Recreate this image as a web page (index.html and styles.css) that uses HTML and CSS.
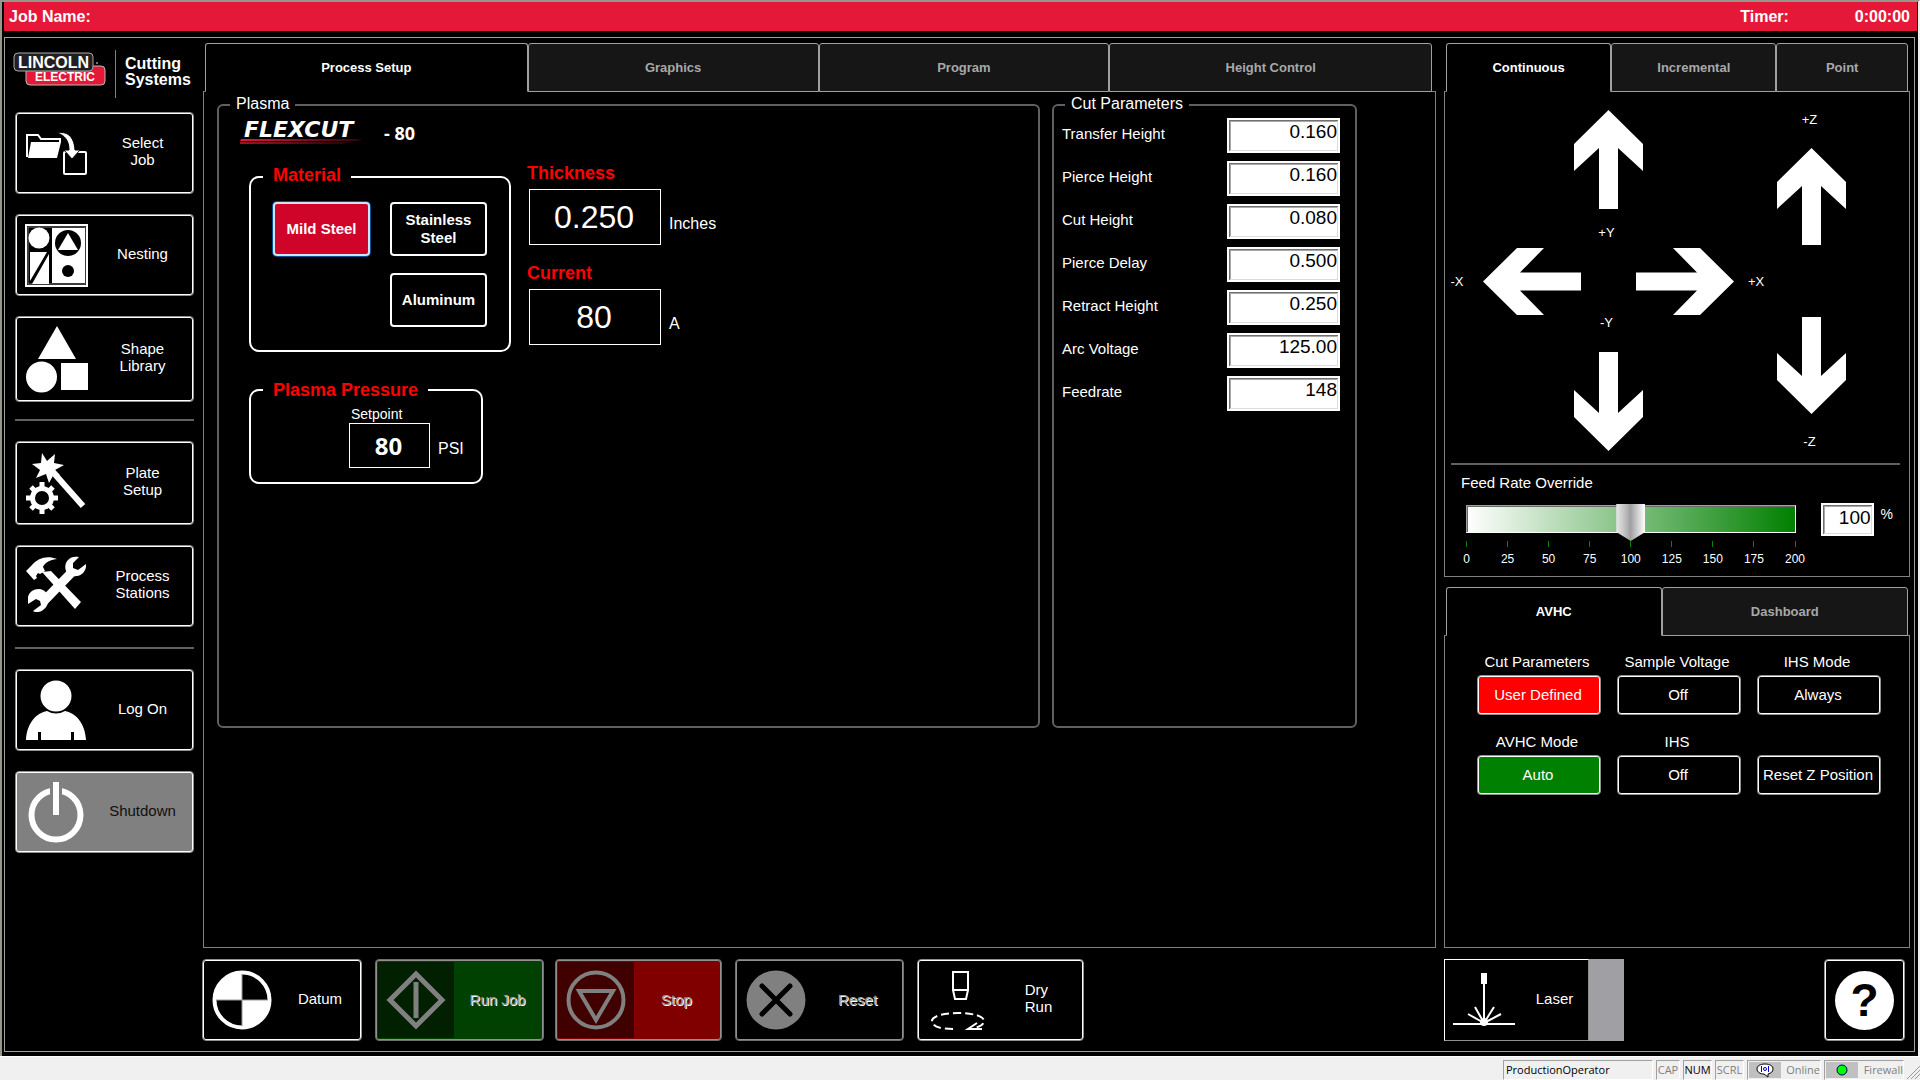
FILE: index.html
```html
<!DOCTYPE html>
<html lang="en">
<head>
<meta charset="utf-8">
<title>Lincoln Electric Cutting Systems</title>
<link rel="stylesheet" href="styles.css">
</head>
<body>
<div class="app">
  <header class="titlebar">
    <span>Job Name:</span>
    <span class="timer"><span>Timer:</span><span>0:00:00</span></span>
  </header>

  <div class="frame">
    <nav class="sidebar">
      <div class="brand">
        <svg class="brand-logo" viewBox="0 0 94 36" width="94" height="36" role="img">
          <rect x="13" y="14" width="79" height="19" rx="4" fill="#e51937" stroke="#b9b9b9"/>
          <rect x="1" y="1" width="79" height="18" rx="4" fill="#231f20" stroke="#a8a8a8"/>
          <text x="5" y="16" class="logo-top">LINCOLN</text>
          <text x="22" y="29" class="logo-bottom">ELECTRIC</text>
          <circle cx="84" cy="11" r="1" fill="#999"/>
        </svg>
        <div class="brand-name">Cutting<br>Systems</div>
      </div>

      <button class="tile" type="button">
        <span class="tile-icon"><svg viewBox="0 0 62 62" width="62" height="62">
          <path d="M2 35V13h11l3 4h19v3" fill="none" stroke="#fff" stroke-width="2"/>
          <path d="M6 20h30l-4 16H3z" fill="#fff"/>
          <rect x="39" y="30" width="22" height="22" rx="1" fill="none" stroke="#fff" stroke-width="2"/>
          <path d="M32 11c9-2 17 2 18 17h5l-8 9-8-9h5c0-9-4-15-12-17z" fill="#fff" stroke="#000"/>
        </svg></span>
        <span class="tile-label">Select<br>Job</span>
      </button>
      <button class="tile" type="button">
        <span class="tile-icon"><svg viewBox="0 0 63 63" width="63" height="63">
          <rect x="1" y="1" width="61" height="61" fill="#000" stroke="#fff" stroke-width="2"/>
          <rect x="3" y="3" width="57" height="57" fill="none" stroke="#777"/>
          <circle cx="14" cy="14" r="10.500" fill="#fff"/>
          <path d="M5 28h17L5 57zM24 30v30H7z" fill="#fff"/>
          <rect x="27" y="4" width="33" height="55" fill="#fff"/>
          <circle cx="43" cy="19" r="13" fill="#000"/>
          <path d="M43 9l10 17H33z" fill="#fff"/>
          <circle cx="43" cy="47" r="6" fill="#000"/>
        </svg></span>
        <span class="tile-label">Nesting</span>
      </button>
      <button class="tile tile-tall" type="button">
        <span class="tile-icon"><svg viewBox="0 0 64 68" width="64" height="68">
          <path d="M33 1l19 33H14z" fill="#fff"/>
          <circle cx="17.500" cy="52" r="15.500" fill="#fff"/>
          <rect x="37" y="38" width="27" height="27" fill="#fff"/>
        </svg></span>
        <span class="tile-label">Shape<br>Library</span>
      </button>
      <hr class="rule rule-tight">
      <button class="tile tile-mid" type="button">
        <span class="tile-icon"><svg viewBox="0 0 62 62" width="62" height="62">
          <path d="M17 1l5 8 8-7-1 9 10 2-9 5 5 5-6-1-5 9-3-9-10 4 4-8-8-6 9-1z" fill="#fff"/>
          <path d="M27 19l31 35" stroke="#fff" stroke-width="6"/>
          <circle cx="17" cy="46" r="9.500" fill="none" stroke="#fff" stroke-width="5"/>
          <g stroke="#fff" stroke-width="5"><path d="M17 30v5M17 57v5M1 46h5M28 46h5M6 35l3 3M25 54l3 3M28 35l-3 3M9 54l-3 3"/></g>
        </svg></span>
        <span class="tile-label">Plate<br>Setup</span>
      </button>
      <button class="tile" type="button">
        <span class="tile-icon"><svg viewBox="0 0 62 62" width="62" height="62">
          <path d="M18 47L48 16" stroke="#fff" stroke-width="9"/>
          <path d="M54 2c-9-2-16 5-13 14 4 8 18 7 20-4V9l-8 6-5-2 0-5z" fill="#fff"/>
          <path d="M3 49v-7c2-9 15-11 19-3 4 9-2 19-12 18l-2-1 8-6-1-4-4-2z" fill="#fff"/>
          <path d="M17 17l9-1 27 28 3 3-6 7-24-27z" fill="#fff"/>
          <path d="M1 16l6-6C13 3 22 0 32 4c-9 1-13 5-14 8l2 4-5 3-2-1-2 3 1 2-3 2z" fill="#fff"/>
        </svg></span>
        <span class="tile-label">Process<br>Stations</span>
      </button>
      <hr class="rule">
      <button class="tile" type="button">
        <span class="tile-icon"><svg viewBox="0 0 62 62" width="62" height="62">
          <path d="M1 61c1-18 11-27 21-29q9 5 18 0c10 2 20 11 21 29H49v-8h-3v8H16v-8h-3v8z" fill="#fff"/>
          <circle cx="31" cy="17" r="15.500" fill="#fff"/>
        </svg></span>
        <span class="tile-label">Log On</span>
      </button>
      <button class="tile tile-grey" type="button">
        <span class="tile-icon"><svg viewBox="0 0 62 62" width="62" height="62">
          <circle cx="31" cy="34" r="24.500" fill="none" stroke="#fff" stroke-width="6"/>
          <path d="M25 2h12v14H25z" fill="#808080"/>
          <path d="M28 1h6v33h-6z" fill="#fff"/>
        </svg></span>
        <span class="tile-label">Shutdown</span>
      </button>
    </nav>

    <main class="work">
      <div class="tabs">
        <button class="tab tab-active" type="button">Process Setup</button>
        <button class="tab" type="button">Graphics</button>
        <button class="tab" type="button">Program</button>
        <button class="tab tab-wide" type="button">Height Control</button>
      </div>
      <section class="tab-body setup">
        <fieldset class="group plasma">
          <legend>Plasma</legend>
          <div class="model">
            <svg width="136" height="38" viewBox="0 0 136 38" role="img">
              <defs><linearGradient id="streak"><stop offset="0" stop-color="#e51937"/><stop offset="1" stop-color="#2a0508"/></linearGradient></defs>
              <text x="4" y="22" class="flexcut">FLEXCUT</text>
              <path d="M1 24h122l-6 2H0z" fill="url(#streak)"/>
              <path d="M0 27h114l-12 2H0z" fill="url(#streak)" opacity=".7"/>
            </svg>
            <span>- 80</span>
          </div>
          <div class="settings">
            <div class="settings-left">
              <fieldset class="box material">
                <legend>Material</legend>
                <div class="material-grid">
                  <button class="choice choice-on" type="button">Mild Steel</button>
                  <button class="choice" type="button">Stainless Steel</button>
                  <button class="choice choice-second" type="button">Aluminum</button>
                </div>
              </fieldset>
              <fieldset class="box pressure">
                <legend>Plasma Pressure</legend>
                <label class="small-label" for="setpoint">Setpoint</label>
                <div class="value-row">
                  <input class="value value-small" id="setpoint" type="text" value="80">
                  <span>PSI</span>
                </div>
              </fieldset>
            </div>
            <div class="readings">
              <label class="red-label" for="thickness">Thickness</label>
              <div class="value-row">
                <input class="value" id="thickness" type="text" value="0.250">
                <span>Inches</span>
              </div>
              <label class="red-label" for="current">Current</label>
              <div class="value-row">
                <input class="value" id="current" type="text" value="80">
                <span>A</span>
              </div>
            </div>
          </div>
        </fieldset>

        <fieldset class="group params">
          <legend>Cut Parameters</legend>
          <div class="param-list">
            <div class="param"><label for="p1">Transfer Height</label><input class="num" id="p1" type="text" value="0.160"></div>
            <div class="param"><label for="p2">Pierce Height</label><input class="num" id="p2" type="text" value="0.160"></div>
            <div class="param"><label for="p3">Cut Height</label><input class="num" id="p3" type="text" value="0.080"></div>
            <div class="param"><label for="p4">Pierce Delay</label><input class="num" id="p4" type="text" value="0.500"></div>
            <div class="param"><label for="p5">Retract Height</label><input class="num" id="p5" type="text" value="0.250"></div>
            <div class="param"><label for="p6">Arc Voltage</label><input class="num" id="p6" type="text" value="125.00"></div>
            <div class="param"><label for="p7">Feedrate</label><input class="num" id="p7" type="text" value="148"></div>
          </div>
        </fieldset>
      </section>

      <div class="actions">
        <button class="tile datum" type="button">
          <span class="tile-icon"><svg viewBox="0 0 60 60" width="60" height="60">
            <circle cx="30" cy="30" r="27.500" fill="#000" stroke="#fff" stroke-width="4"/>
            <path d="M30 30V2A28 28 0 0 0 2 30zM30 30v28a28 28 0 0 0 28-28z" fill="#fff"/>
            <path d="M30 4v52M4 30h52" stroke="#999"/>
          </svg></span>
          <span class="tile-label">Datum</span>
        </button>
        <button class="tile off run" type="button" disabled>
          <span class="tile-icon"><svg viewBox="0 0 60 60" width="60" height="60" fill="none" stroke="#808080">
            <path d="M30 4l26 26-26 26L4 30z" stroke-width="5"/><path d="M30 12v36" stroke-width="5"/>
          </svg></span>
          <span class="tile-label">Run Job</span>
        </button>
        <button class="tile off stop" type="button" disabled>
          <span class="tile-icon"><svg viewBox="0 0 60 60" width="60" height="60" fill="none" stroke="#808080">
            <circle cx="30" cy="30" r="27.500" stroke-width="4"/><path d="M13 21h34L30 50z" stroke-width="4"/>
          </svg></span>
          <span class="tile-label">Stop</span>
        </button>
        <button class="tile off reset" type="button" disabled>
          <span class="tile-icon"><svg viewBox="0 0 60 60" width="60" height="60">
            <circle cx="30" cy="30" r="29.500" fill="#808080"/>
            <path d="M16 16l28 28M44 16L16 44" stroke="#000" stroke-width="5" stroke-linecap="round"/>
          </svg></span>
          <span class="tile-label">Reset</span>
        </button>
        <button class="tile dry" type="button">
          <span class="tile-icon"><svg viewBox="0 0 60 60" width="60" height="60" fill="none" stroke="#fff" stroke-width="2">
            <path d="M26 2h15v18H26zM26 20l2 9h11l2-9"/>
            <path d="M26 59C12 59 5 56 5 51c0-5 12-8 26-8s26 3 26 8c0 3-3 5-9 7" stroke-dasharray="8 4"/>
            <path d="M50 53l-9 6h14" />
          </svg></span>
          <span class="tile-label"><span class="left">Dry<br>Run</span></span>
        </button>
      </div>
    </main>

    <aside class="side">
      <div class="tabs">
        <button class="tab jog-a tab-active" type="button">Continuous</button>
        <button class="tab jog-a" type="button">Incremental</button>
        <button class="tab jog-b" type="button">Point</button>
      </div>
      <section class="tab-body jog">
        <div class="pads">
          <div class="pad-xy">
            <button class="arrow y-plus" type="button" aria-labelledby="lyp"><svg width="69" height="99" viewBox="0 0 69 99"><path d="M34.500 0L69 34v27L44 38v61H25V38L0 61V34z"/></svg></button>
            <span class="axis l-y-plus" id="lyp">+Y</span>
            <span class="axis l-x-minus" id="lxm">-X</span>
            <button class="arrow x-minus" type="button" aria-labelledby="lxm"><svg width="98" height="67" viewBox="0 0 98 67"><path d="M0 33.500L34 0h27L37 24.500h61v18H37L61 67H34z"/></svg></button>
            <button class="arrow x-plus" type="button" aria-labelledby="lxp"><svg width="98" height="67" viewBox="0 0 98 67"><path d="M98 33.500L64 0H37l24 24.500H0v18h61L37 67h27z"/></svg></button>
            <span class="axis l-x-plus" id="lxp">+X</span>
            <span class="axis l-y-minus" id="lym">-Y</span>
            <button class="arrow y-minus" type="button" aria-labelledby="lym"><svg width="69" height="99" viewBox="0 0 69 99"><path d="M34.500 99L69 65V38L44 61V0H25v61L0 38v27z"/></svg></button>
          </div>
          <div class="pad-z">
            <span class="axis" id="lzp">+Z</span>
            <button class="arrow" type="button" aria-labelledby="lzp"><svg width="69" height="97" viewBox="0 0 69 97"><path d="M34.500 0L69 34v27L44 38v59H25V38L0 61V34z"/></svg></button>
            <button class="arrow z-minus" type="button" aria-labelledby="lzm"><svg width="69" height="97" viewBox="0 0 69 97"><path d="M34.500 97L69 63V36L44 59V0H25v59L0 36v27z"/></svg></button>
            <span class="axis" id="lzm">-Z</span>
          </div>
        </div>
        <hr class="rule">
        <div class="feed">
          <label class="feed-title" for="feed">Feed Rate Override</label>
          <div class="feed-row">
            <div class="feed-slider">
              <input class="slider" id="feed" type="range" min="0" max="200" value="100">
              <div class="ticks"><span>0</span><span>25</span><span>50</span><span>75</span><span>100</span><span>125</span><span>150</span><span>175</span><span>200</span></div>
            </div>
            <input class="num num-feed" id="pct" type="text" value="100">
            <label class="pct" for="pct">%</label>
          </div>
        </div>
      </section>

      <div class="tabs tabs-lower">
        <button class="tab avhc-a tab-active" type="button">AVHC</button>
        <button class="tab avhc-b" type="button">Dashboard</button>
      </div>
      <section class="tab-body avhc">
        <div class="modes">
          <div class="mode"><span>Cut Parameters</span><button class="mode-btn red" type="button">User Defined</button></div>
          <div class="mode"><span>Sample Voltage</span><button class="mode-btn" type="button">Off</button></div>
          <div class="mode"><span>IHS Mode</span><button class="mode-btn" type="button">Always</button></div>
          <div class="mode"><span>AVHC Mode</span><button class="mode-btn green" type="button">Auto</button></div>
          <div class="mode"><span>IHS</span><button class="mode-btn" type="button">Off</button></div>
          <div class="mode"><button class="mode-btn" type="button">Reset Z Position</button></div>
        </div>
      </section>

      <div class="actions">
        <button class="tile laser" type="button">
          <span class="tile-icon"><svg viewBox="0 0 66 60" width="66" height="60">
            <path d="M30 3h6v11h-6zM32 14h2v36h-2z" fill="#fff"/>
            <path d="M2 54h62" stroke="#fff" stroke-width="2"/>
            <path d="M33 53L17 44M33 53L24 37M33 53L43 37M33 53l17-9" stroke="#fff" stroke-width="2"/>
            <circle cx="33" cy="52" r="4" fill="#fff"/>
          </svg></span>
          <span class="tile-label">Laser</span>
        </button>
        <span class="laser-state"></span>
        <button class="tile help" type="button"><span>?</span></button>
      </div>
    </aside>
  </div>
</div>

<footer class="status">
  <span class="cell operator">ProductionOperator</span>
  <span class="cell cap dim">CAP</span>
  <span class="cell num-lock">NUM</span>
  <span class="cell scrl dim">SCRL</span>
  <span class="cell online dim"><span class="lamp"><svg width="18" height="15" viewBox="0 0 18 15"><path d="M9 1C4 1 1 3 1 6s3 5 7 5l4 3v-3c3-1 5-2 5-5s-3-5-8-5z" fill="#fff" stroke="#000"/><path d="M5.500 3v6M12.500 3v6" stroke="#00c"/><circle cx="9" cy="6" r="1.500" fill="none" stroke="#00c"/></svg></span>Online</span>
  <span class="cell firewall dim"><span class="lamp"><svg width="12" height="12" viewBox="0 0 12 12"><circle cx="6" cy="6" r="5" fill="#0f0" stroke="#006"/></svg></span>Firewall</span>
  <svg class="grip" width="13" height="13" viewBox="0 0 13 13"><path d="M0 13L13 0M4 13l9-9M8 13l5-5" stroke="#999"/></svg>
</footer>
</body>
</html>
```
FILE: styles.css
```css
* {
  box-sizing: border-box;
}

body {
  margin: 0;
  min-height: 100vh;
  display: flex;
  flex-direction: column;
  background: #000;
  color: #fff;
  font-family: "Liberation Sans", Arial, sans-serif;
  font-size: 15px;
}

button,
input {
  font: inherit;
  color: inherit;
  margin: 0;
}

svg {
  display: block;
}

.app {
  flex: 1;
  display: flex;
  flex-direction: column;
  border: 2px solid #96968f;
  border-right-color: #f0f0f0;
  border-bottom: 0;
  padding: 0 1px 0 2px;
}

.titlebar {
  display: flex;
  justify-content: space-between;
  padding: 0 7px 0 5px;
  background: #e51937;
  font-size: 16px;
  font-weight: bold;
  line-height: 29px;
}

.timer {
  display: flex;
  gap: 66px;
}

.frame {
  flex: 1;
  display: flex;
  margin: 6px 2px 4px 0;
  padding: 5px 4px 10px 0;
  border: 1px solid #a0a0a0;
}

/* Left navigation */

.sidebar {
  width: 198px;
  padding: 7px 9px 0 10px;
  display: flex;
  flex-direction: column;
  gap: 20px;
}

.brand {
  display: flex;
  align-items: center;
  height: 48px;
  margin: 0 0 -6px -2px;
}

.brand-logo {
  margin: 0 8px 8px 0;
  flex: none;
}

.logo-top {
  font-size: 16px;
  font-weight: bold;
  fill: #fff;
}

.logo-bottom {
  font-size: 12px;
  font-weight: bold;
  fill: #fff;
}

.brand-name {
  align-self: stretch;
  padding: 6px 0 0 9px;
  border-left: 1px solid #808080;
  font-size: 16px;
  font-weight: bold;
  line-height: 16px;
}

.tile {
  display: flex;
  height: 82px;
  flex: none;
  padding: 1px;
  border: 1px solid #909090;
  border-radius: 4px;
  background: #000;
  box-shadow: inset 0 0 0 1px #fff;
  line-height: 17px;
}

.tile-tall {
  height: 86px;
}

.tile-mid {
  height: 84px;
}

.tile-icon {
  width: 76px;
  flex: none;
  align-self: stretch;
  display: flex;
  align-items: center;
  justify-content: center;
}

.tile-label {
  flex: 1;
  align-self: center;
  padding-bottom: 4px;
  text-align: center;
  white-space: nowrap;
}

.sidebar .tile-icon {
  padding-left: 2px;
}

.tile-grey {
  background: #808080;
  color: #101010;
}

.rule {
  align-self: stretch;
  height: 2px;
  margin: 0;
  border: 0;
  background: #606060;
}

.rule-tight {
  margin-top: -3px;
}

/* Tabs */

.tabs {
  display: flex;
  height: 49px;
  margin-bottom: -1px;
  padding: 0 4px 0 2px;
}

.side .tabs {
  padding-right: 2px;
}

.tab {
  position: relative;
  flex: 290 0 0;
  padding: 0;
  border: 1px solid #a0a0a0;
  border-radius: 3px 3px 0 0;
  background: #161616;
  color: #a8a8a8;
  font-size: 13px;
  font-weight: bold;
}

.tab-active {
  flex-grow: 322;
  border-bottom-color: #000;
  background: #000;
  color: #fff;
}

.tab-wide {
  flex-grow: 322;
}

.jog-a {
  flex-grow: 165;
}

.jog-b {
  flex-grow: 131;
}

.avhc-a {
  flex-grow: 215;
}

.avhc-b {
  flex-grow: 246;
}

.tab-body {
  border: 1px solid #808080;
}

/* Process setup */

.work {
  flex: 1;
  display: flex;
  flex-direction: column;
}

.setup {
  flex: 1;
  display: flex;
  align-items: flex-start;
  gap: 12px;
  padding: 3px 78px 0 13px;
}

fieldset {
  margin: 0;
  padding: 0;
  min-width: 0;
}

.group {
  min-height: 633px;
  border: 2px solid #606060;
  border-radius: 6px;
}

.group > legend {
  margin-left: 11px;
  padding: 0 6px 2px;
  font-size: 16px;
  line-height: 18px;
}

.plasma {
  flex: 1;
}

.params {
  width: 305px;
}

.model {
  display: flex;
  align-items: center;
  gap: 8px;
  height: 38px;
  margin: 0 0 9px 21px;
  font-family: "Open Sans", sans-serif;
  font-size: 18px;
  font-weight: bold;
  line-height: 24px;
}

.model span {
  padding-bottom: 2px;
}

.flexcut {
  font-family: "DejaVu Sans", sans-serif;
  font-size: 22px;
  font-weight: bold;
  font-style: italic;
  fill: #fff;
}

.settings {
  display: flex;
  gap: 16px;
  padding-left: 30px;
}

.settings-left {
  display: flex;
  flex-direction: column;
  align-items: flex-start;
  gap: 27px;
  padding-top: 4px;
}

.box {
  border: 2px solid #fff;
  border-radius: 10px;
}

.box > legend {
  margin-left: 12px;
  padding: 0 10px;
}

.box > legend,
.red-label {
  color: #f00;
  font-size: 18px;
  font-weight: bold;
  line-height: 22px;
}

.box.material > legend {
  padding-bottom: 4px;
  line-height: 18px;
}

.material-grid {
  display: grid;
  grid-template-columns: 97px 97px;
  grid-auto-rows: 54px;
  gap: 17px 20px;
  padding: 14px 22px 23px;
}

.choice {
  padding: 0;
  border: 2px solid #fff;
  border-radius: 4px;
  background: #000;
  font-weight: bold;
  line-height: 18px;
}

.choice-on {
  border-color: #cce4f7;
  background: #d00428;
  box-shadow: 0 0 0 1px #0a4f8f;
}

.choice-second {
  grid-column: 2;
}

.pressure {
  width: 234px;
  padding-bottom: 14px;
}

.small-label {
  display: block;
  padding: 4px 0 0 100px;
  font-size: 14px;
  line-height: 18px;
}

.pressure .value-row {
  padding-left: 98px;
}

.value-row {
  display: flex;
  gap: 8px;
  font-size: 16px;
  line-height: 20px;
}

.value-row span {
  padding-top: 25px;
}

.pressure .value-row span {
  padding-top: 16px;
}

.value {
  width: 132px;
  height: 56px;
  padding: 0 2px 0 0;
  border: 1px solid #fff;
  background: #000;
  font-size: 32px;
  text-align: center;
}

.value-small {
  width: 81px;
  height: 45px;
  font-family: "Open Sans", sans-serif;
  font-size: 24px;
  font-weight: bold;
}

.red-label {
  display: block;
  margin-bottom: 5px;
}

.readings .value-row {
  padding-left: 2px;
  margin-bottom: 17px;
}

.param-list {
  display: flex;
  flex-direction: column;
  gap: 8px;
  padding: 3px 15px 0 8px;
}

.param {
  display: flex;
  justify-content: space-between;
  line-height: 32px;
}

.num {
  width: 113px;
  height: 35px;
  padding: 0 1px 7px;
  border: 2px solid #fff;
  background: #fff;
  box-shadow: inset 1px 1px #707070, inset -1px -1px #dcdcdc, inset 2px 2px #a8a8a8;
  color: #000;
  font-size: 19px;
  text-align: right;
}

/* Bottom actions */

.actions {
  display: flex;
  padding-top: 11px;
}

.work .actions {
  margin-left: -1px;
}

.datum {
  width: 160px;
  margin-right: 13px;
}

.run {
  width: 169px;
  margin-right: 11px;
}

.stop {
  width: 167px;
  margin-right: 13px;
}

.reset {
  width: 169px;
  margin-right: 13px;
}

.dry {
  width: 167px;
}

.off {
  padding: 2px;
  border-color: #707070;
  box-shadow: inset 0 0 0 1px #909090;
  color: #a0a0a0;
  text-shadow: 1px 1px 0 #fff;
}

.off .tile-label {
  padding-bottom: 2px;
}

.run {
  background: #004000;
}

.run .tile-icon {
  background: #002000;
}

.stop {
  background: #800000;
}

.stop .tile-icon {
  background: #400000;
}

.left {
  display: inline-block;
  text-align: left;
}

.laser {
  width: 145px;
  border: 1px solid #fff;
  border-right-color: #909090;
  border-bottom-color: #909090;
  border-radius: 0;
  box-shadow: none;
}

.laser-state {
  width: 35px;
  background: #a09fa4;
}

.help {
  width: 81px;
  margin: 0 5px 0 auto;
  align-items: center;
  justify-content: center;
}

.help span {
  width: 59px;
  height: 59px;
  border-radius: 50%;
  background: #fff;
  color: #000;
  font-size: 46px;
  font-weight: bold;
  line-height: 59px;
}

/* Right column */

.side {
  width: 466px;
  margin-left: 8px;
  display: flex;
  flex-direction: column;
}

.jog {
  padding: 18px 0 10px 4px;
}

.jog .rule {
  margin: 12px 9px 0 2px;
}

.pads {
  display: flex;
}

.pad-xy {
  display: grid;
  grid-template-columns: 16px 18px 98px 55px 98px 14px 16px;
  grid-template-rows: 99px 39px 67px 37px 99px;
  justify-items: center;
  align-items: center;
}

.arrow {
  padding: 0;
  border: 0;
  background: none;
}

.arrow svg {
  fill: #fff;
}

.axis {
  font-size: 13px;
  line-height: 16px;
}

.y-plus {
  grid-area: 1 / 3 / 2 / 6;
}

.l-y-plus {
  grid-area: 2 / 3 / 3 / 6;
  padding: 9px 4px 0 0;
}

.l-x-minus {
  grid-area: 3 / 1;
}

.x-minus {
  grid-area: 3 / 3;
}

.x-plus {
  grid-area: 3 / 5;
}

.l-x-plus {
  grid-area: 3 / 7;
}

.l-y-minus {
  grid-area: 4 / 3 / 5 / 6;
  align-self: start;
  padding-right: 4px;
}

.y-minus {
  grid-area: 5 / 3 / 6 / 6;
}

.pad-z {
  display: flex;
  flex-direction: column;
  align-items: center;
  gap: 20px;
  padding: 2px 0 0 13px;
}

.pad-z .axis {
  padding-right: 4px;
}

.z-minus {
  margin-top: 52px;
}

.feed {
  padding: 9px 16px 0 12px;
}

.feed-title {
  display: block;
  line-height: 18px;
}

.feed-row {
  display: flex;
  align-items: flex-start;
  padding-top: 11px;
}

.feed-slider {
  flex: 1;
  margin: 2px 0 0 5px;
}

.slider {
  -webkit-appearance: none;
  appearance: none;
  display: block;
  width: 100%;
  height: 28px;
  background: none;
}

.slider::-webkit-slider-runnable-track {
  height: 28px;
  border: 1px solid;
  border-color: #a0a0a0 #fff #fff #a0a0a0;
  background: linear-gradient(to right, #fff, #008000);
  box-shadow: inset 1px 1px #696969;
}

.slider::-webkit-slider-thumb {
  -webkit-appearance: none;
  appearance: none;
  width: 29px;
  height: 37px;
  margin-top: -2px;
  background: linear-gradient(to right, #e8e8e8, #c8c8c8 25%, #a0a0a4 50%, #d0d0d0 75%, #fff);
  clip-path: polygon(0 0, 100% 0, 100% 76%, 50% 100%, 0 76%);
}

.ticks {
  display: flex;
  justify-content: space-between;
  margin: 8px -20px 0 -20px;
  font-size: 12px;
  line-height: 14px;
}

.ticks span {
  width: 41px;
  text-align: center;
}

.ticks span::before {
  content: "";
  display: block;
  width: 1px;
  height: 6px;
  margin: 0 auto 5px;
  background: #008000;
}

.num-feed {
  width: 53px;
  height: 33px;
  margin-left: 25px;
  padding-bottom: 4px;
}

.pct {
  padding: 3px 0 0 7px;
  font-size: 14px;
  line-height: 16px;
}

.tabs-lower {
  margin-top: 10px;
}

.avhc {
  flex: 1;
  padding: 17px 28px 0 32px;
}

.modes {
  display: grid;
  grid-template-columns: repeat(3, 124px);
  justify-content: space-between;
  row-gap: 18px;
}

.mode {
  display: flex;
  flex-direction: column;
  justify-content: flex-end;
  gap: 5px;
  text-align: center;
  line-height: 17px;
}

.mode > span {
  padding-right: 4px;
}

.mode-btn {
  height: 40px;
  padding: 0 2px 2px 0;
  border: 1px solid #909090;
  border-radius: 4px;
  background: #000;
  box-shadow: inset 0 0 0 1px #fff;
}

.mode-btn.red {
  background: #f00;
}

.mode-btn.green {
  background: #008000;
}

/* Status bar */

.status {
  height: 24px;
  display: flex;
  justify-content: flex-end;
  gap: 3px;
  padding-top: 3px;
  border-top: 1px solid #fff;
  background: #f0f0f0;
  color: #000;
  font-family: "Open Sans", sans-serif;
  font-size: 11px;
  line-height: 18px;
}

.cell {
  display: flex;
  justify-content: center;
  border: 1px solid;
  border-color: #a0a0a0 #fff #fff #a0a0a0;
  white-space: nowrap;
}

.dim {
  color: #808080;
}

.operator {
  width: 150px;
  justify-content: flex-start;
  padding-left: 2px;
}

.cap {
  width: 24px;
}

.num-lock,
.scrl {
  width: 29px;
}

.online {
  width: 74px;
  justify-content: space-between;
}

.firewall {
  width: 80px;
  justify-content: space-between;
}

.lamp {
  width: 32px;
  margin: 1px;
  display: flex;
  align-items: center;
  justify-content: center;
  background: #c0c0c0;
}

.grip {
  margin-top: 6px;
}
```
